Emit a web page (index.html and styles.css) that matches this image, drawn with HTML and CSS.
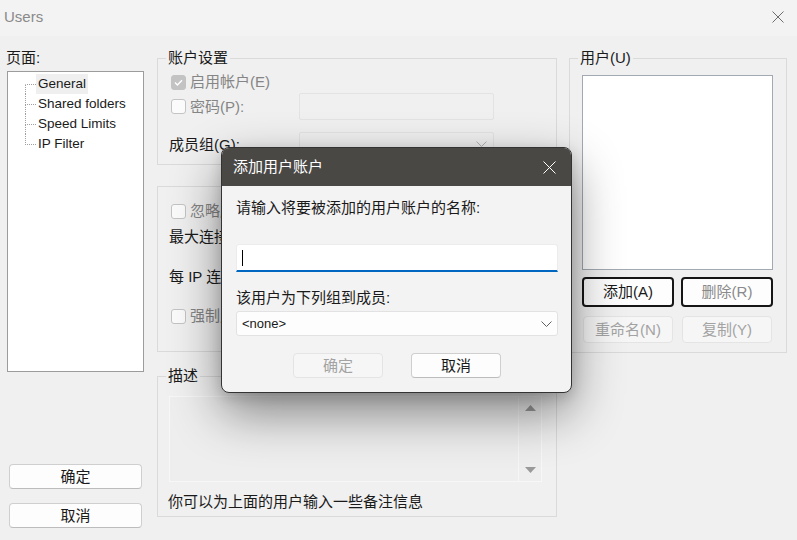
FILE: index.html
```html
<!DOCTYPE html>
<html lang="zh-CN">
<head>
    <meta charset="UTF-8">
    <meta name="viewport" content="width=device-width, initial-scale=1.0">
    <title>Users</title>
    <link rel="stylesheet" href="styles.css">
</head>
<body>
    <header class="titlebar">
        <span class="title">Users</span>
        <svg class="close" width="12" height="12" viewBox="0 0 12 12"><path d="M0.5 0.5L11.5 11.5M11.5 0.5L0.5 11.5"/></svg>
    </header>

    <main class="panes">
        <!-- 左侧：页面树 + 确定/取消 -->
        <section class="pages">
            <div class="label">页面:</div>
            <ul class="tree">
                <li><span class="branch"></span><span class="node sel">General</span></li>
                <li><span class="branch"></span><span class="node">Shared folders</span></li>
                <li><span class="branch"></span><span class="node">Speed Limits</span></li>
                <li><span class="branch"></span><span class="node">IP Filter</span></li>
            </ul>
            <div class="actions">
                <button class="btn">确定</button>
                <button class="btn">取消</button>
            </div>
        </section>

        <!-- 中间：账户设置 / 限制 / 描述 -->
        <section class="settings">
            <fieldset class="group account">
                <legend>账户设置</legend>
                <div class="row r1">
                    <span class="check on"><svg width="15" height="15" viewBox="0 0 15 15"><path d="M4 7.6L6.4 10L11 5.2"/></svg></span>
                    <span class="dim">启用帐户(E)</span>
                </div>
                <div class="row r2">
                    <span class="row-label"><span class="check"></span><span class="dim">密码(P):</span></span>
                    <span class="field"></span>
                </div>
                <div class="row r3">
                    <span class="row-label">成员组(G):</span>
                    <span class="field select"><svg width="11" height="6" viewBox="0 0 11 6"><path d="M0.5 0.5L5.5 5.5L10.5 0.5"/></svg></span>
                </div>
            </fieldset>

            <!-- 这一组被对话框挡住，只露出左边一截 -->
            <fieldset class="group limits">
                <div class="row l1"><span class="check"></span><span class="dim cut">忽略服</span></div>
                <div class="row l2"><span class="cut">最大连接数</span></div>
                <div class="row l3"><span class="cut">每 IP 连接</span></div>
                <div class="row l4"><span class="check"></span><span class="dim cut">强制用</span></div>
            </fieldset>

            <fieldset class="group notes">
                <legend>描述</legend>
                <div class="memo">
                    <div class="memo-text"></div>
                    <div class="memo-scroll">
                        <svg width="11" height="6" viewBox="0 0 11 6"><path d="M5.5 0L11 6H0Z"/></svg>
                        <svg width="11" height="6" viewBox="0 0 11 6"><path d="M0 0H11L5.5 6Z"/></svg>
                    </div>
                </div>
                <p class="hint">你可以为上面的用户输入一些备注信息</p>
            </fieldset>
        </section>

        <!-- 右侧：用户列表 -->
        <section class="users">
            <fieldset class="group userlist">
                <legend>用户(U)</legend>
                <div class="listbox"></div>
                <div class="user-btns">
                    <button class="btn focus">添加(A)</button>
                    <button class="btn focus off">删除(R)</button>
                    <button class="btn ghost">重命名(N)</button>
                    <button class="btn ghost">复制(Y)</button>
                </div>
            </fieldset>
        </section>
    </main>

    <!-- 添加用户对话框 -->
    <div class="dialog">
        <div class="dlg-title">
            <span>添加用户账户</span>
            <svg width="13" height="13" viewBox="0 0 13 13"><path d="M0.5 0.5L12.5 12.5M12.5 0.5L0.5 12.5"/></svg>
        </div>
        <div class="dlg-body">
            <div class="prompt">请输入将要被添加的用户账户的名称:</div>
            <div class="name-input"><span class="caret"></span></div>
            <div class="prompt sub">该用户为下列组到成员:</div>
            <div class="combo">
                <span>&lt;none&gt;</span>
                <svg width="11" height="6" viewBox="0 0 11 6"><path d="M0.5 0.5L5.5 5.5L10.5 0.5"/></svg>
            </div>
            <div class="dlg-btns">
                <button class="btn ghost">确定</button>
                <button class="btn">取消</button>
            </div>
        </div>
    </div>
</body>
</html>
```

FILE: styles.css
```css
* { box-sizing: border-box; }

html, body { margin: 0; }
body {
    width: 797px;
    height: 540px;
    overflow: hidden;
    position: relative;
    background: #f0f0f0;
    color: #1a1a1a;
    font: 15px/18px "Liberation Sans", "Noto Sans CJK SC", sans-serif;
}

/* 窗口标题栏 */
.titlebar {
    height: 36px;
    background: #f3f3f3;
    display: flex;
    align-items: center;
    justify-content: space-between;
    padding: 0 13px 3px 4px;
}
.title { color: #8a8a8a; }
.close path { stroke: #6e6e6e; stroke-width: 1; fill: none; }

/* 三栏 */
.panes {
    display: grid;
    grid-template-columns: 138px 400px 218px;
    column-gap: 12px;
    align-items: start;
    padding: 14px 0 0 7px;
}

/* 左栏 */
.pages {
    height: 478px;
    display: flex;
    flex-direction: column;
}
.label { line-height: 16px; margin-left: -1px; }
.tree {
    list-style: none;
    margin: 5px 0 0;
    width: 137px;
    height: 301px;
    padding: 2px 0 0 17px;
    background: #fff;
    border: 1px solid #9c9c9c;
}
.tree li {
    height: 20px;
    display: flex;
    font-size: 13.5px;
}
.branch {
    width: 11px;
    display: flex;
    flex-direction: column;
}
.branch::before {
    content: '';
    height: 10px;
    border-left: 1px dotted #a0a0a0;
    border-bottom: 1px dotted #a0a0a0;
}
.branch::after {
    content: '';
    flex: 1;
    border-left: 1px dotted #a0a0a0;
}
.tree li:first-child .branch::before { border-left-color: transparent; }
.tree li:last-child .branch::after { border-left: none; }
.node {
    line-height: 19px;
    padding: 0 2px 0 2px;
}
.node.sel { background: #efefef; }

.actions {
    margin-top: auto;
    display: flex;
    flex-direction: column;
    gap: 14px;
    padding-left: 2px;
}
.actions .btn { width: 133px; height: 25px; }

/* 按钮 */
.btn {
    font: inherit;
    color: #1a1a1a;
    background: #fdfdfd;
    border: 1px solid #cfcfcf;
    border-bottom-color: #bcbcbc;
    border-radius: 4px;
    padding: 0;
}
.btn.focus { border: 2px solid #161616; }
.btn.off { color: #8a8a8a; }
.btn.ghost {
    background: #f6f6f6;
    border-color: #e4e4e4;
    color: #a3a3a3;
}

/* 分组框 */
.group {
    margin: 0;
    min-width: 0;
    border: 1px solid #dadada;
    padding: 0 14px 0 11px;
}
.group legend {
    line-height: 16px;
    padding: 0 2px;
    margin-left: -3px;
}
.row {
    display: flex;
    align-items: center;
}
.row-label {
    width: 130px;
    display: flex;
    align-items: center;
    flex: none;
}
.dim { color: #858585; }
.check {
    width: 15px;
    height: 15px;
    flex: none;
    margin: 0 4px 0 2px;
    border: 1px solid #c4c4c4;
    border-radius: 3px;
    background: #fbfbfb;
    display: flex;
}
.check.on { background: #c3c3c3; border-color: #c3c3c3; }
.check svg { margin: -1px; }
.check path { stroke: #fff; stroke-width: 1.4; fill: none; }
.field {
    width: 195px;
    height: 27px;
    border: 1px solid #e3e3e3;
    background: #f0f0f0;
    border-radius: 2px;
}
.field.select {
    height: 26px;
    display: flex;
    justify-content: flex-end;
    padding: 8px 6px 0 0;
}
.field.select path { stroke: #b4b4b4; fill: none; }

.account { padding-top: 7px; padding-bottom: 6px; }
.account .r1 { height: 18px; }
.account .r2 { height: 27px; margin-top: 2px; }
.account .r3 { height: 26px; margin-top: 12px; }

.limits { margin-top: 21px; padding-top: 15px; padding-bottom: 26px; }
.limits .l1 { height: 18px; }
.limits .l2 { height: 26px; margin-top: 4px; }
.limits .l3 { height: 26px; margin-top: 14px; }
.limits .l4 { height: 18px; margin-top: 17px; }
.limits .cut { white-space: nowrap; }

.notes { margin-top: 16px; padding-top: 12px; padding-bottom: 5px; }
.memo {
    height: 86px;
    display: flex;
    border: 1px solid #f7f7f7;
    background: #eeeeee;
}
.memo-text { flex: 1; }
.memo-scroll {
    width: 23px;
    border-left: 1px solid #f6f6f6;
    display: flex;
    flex-direction: column;
    align-items: center;
    justify-content: space-between;
    padding: 8px 0 8px;
}
.memo-scroll path { fill: #9a9a9a; }
.hint { margin: 11px 0 0 -1px; }

/* 右栏 */
.userlist {
    height: 303px;
    padding: 9px 13px 9px 12px;
}
.userlist legend { margin-left: -4px; }
.listbox {
    height: 195px;
    background: #fff;
    border: 1px solid #a2a9b2;
}
.user-btns {
    margin-top: 7px;
    display: grid;
    grid-template-columns: 1fr 1fr;
    grid-template-rows: 30px 27px;
    column-gap: 7px;
    row-gap: 9px;
}
.user-btns .ghost { margin: 0 1px; }

/* 对话框 */
.dialog {
    position: absolute;
    left: 221px;
    top: 147px;
    width: 351px;
    height: 246px;
    border: 1px solid #333;
    border-radius: 8px;
    overflow: hidden;
    background: #f3f3f3;
    box-shadow: 0 20px 50px rgba(0, 0, 0, 0.45), 0 4px 14px rgba(0, 0, 0, 0.15);
}
.dlg-title {
    height: 38px;
    background: #4a4845;
    color: #fff;
    display: flex;
    align-items: center;
    justify-content: space-between;
    padding: 0 15px 0 11px;
}
.dlg-title path { stroke: #fff; stroke-width: 1; fill: none; }
.dlg-body { padding: 13px 13px 0 14px; }
.prompt { line-height: 18px; }
.prompt.sub { margin-top: 17px; }
.name-input {
    margin-top: 27px;
    height: 28px;
    background: #fff;
    border: 1px solid #ececec;
    border-bottom: 2px solid #0067c0;
    border-radius: 3px 3px 0 0;
    display: flex;
    align-items: center;
    padding-left: 5px;
}
.caret { width: 1px; height: 16px; background: #000; }
.combo {
    margin-top: 4px;
    height: 25px;
    background: #fdfdfd;
    border: 1px solid #e2e2e2;
    border-radius: 3px;
    display: flex;
    align-items: center;
    justify-content: space-between;
    padding: 0 5px 0 5px;
    font-size: 13px;
}
.combo path { stroke: #606060; fill: none; }
.dlg-btns {
    margin-top: 17px;
    display: flex;
    justify-content: center;
    gap: 28px;
}
.dlg-btns .btn { width: 90px; height: 25px; }
```
